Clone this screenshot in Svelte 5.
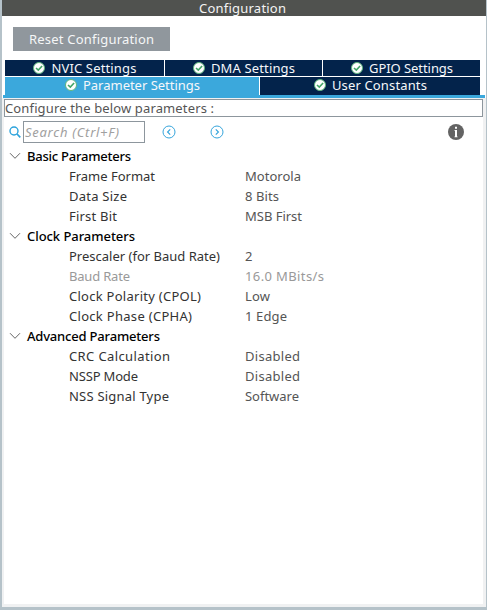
<script>
  const tabRows = [
    [
      { label: 'NVIC Settings', width: 159, text: 85 },
      { label: 'DMA Settings', width: 157, text: 84 },
      { label: 'GPIO Settings', width: 157, text: 84 }
    ],
    [
      { label: 'Parameter Settings', width: 254, text: 117, active: true },
      { label: 'User Constants', width: 220, text: 95 }
    ]
  ];

  const groups = [
    { name: 'Basic Parameters', w: 104, items: [
      ['Frame Format', 86, 'Motorola', 56],
      ['Data Size', 58, '8 Bits', 34],
      ['First Bit', 48, 'MSB First', 57]
    ] },
    { name: 'Clock Parameters', w: 108, items: [
      ['Prescaler (for Baud Rate)', 151, '2', 8],
      ['Baud Rate', 61, '16.0 MBits/s', 79, true],
      ['Clock Polarity (CPOL)', 132, 'Low', 25],
      ['Clock Phase (CPHA)', 123, '1 Edge', 42]
    ] },
    { name: 'Advanced Parameters', w: 133, items: [
      ['CRC Calculation', 101, 'Disabled', 55],
      ['NSSP Mode', 69, 'Disabled', 55],
      ['NSS Signal Type', 100, 'Software', 54]
    ] }
  ];

  // Spread the letters so that a label takes its nominal width.
  function fit(node, width) {
    const natural = node.getBoundingClientRect().width;
    const count = node.textContent.length;
    if (count > 1) node.style.letterSpacing = `${(width - natural) / (count - 1)}px`;
  }
</script>

<main>
  <header><span use:fit={87}>Configuration</span></header>
  <div class="toolbar"><button><span use:fit={125}>Reset Configuration</span></button></div>
  <nav>
    {#each tabRows as row}
      <div class="tabs">
        {#each row as tab}
          <div class="tab" class:active={tab.active} style:width="{tab.width}px">
            <svg width="12" height="12" viewBox="0 0 12 12">
              <circle cx="6" cy="6" r="5.5" fill="#fff" stroke="#5fb57e" />
              <path d="M3 6 5.3 8.1 9.1 4" fill="none" stroke="#43a667" stroke-width="1.6" />
            </svg>
            <span use:fit={tab.text}>{tab.label}</span>
          </div>
        {/each}
      </div>
    {/each}
  </nav>
  <div class="band"></div>
  <section>
    <div class="caption"><span use:fit={209}>Configure the below parameters :</span></div>
    <div class="search">
      <svg class="lens" width="12" height="12" viewBox="0 0 12 12" fill="none" stroke="#2ca3dc">
        <circle cx="5" cy="5" r="4" stroke-width="1.4" />
        <path d="m8 8 3.3 3.3" stroke-width="1.7" />
      </svg>
      <div class="field"><span use:fit={94}>Search (Ctrl+F)</span></div>
      <svg class="prev" width="14" height="14" viewBox="0 0 14 14" fill="none" stroke="#36a5dc">
        <circle cx="7" cy="7" r="6" />
        <path d="M8.2 4.3 5.6 7l2.6 2.7" stroke-width="1.2" />
      </svg>
      <svg class="next" width="14" height="14" viewBox="0 0 14 14" fill="none" stroke="#36a5dc">
        <circle cx="7" cy="7" r="6" />
        <path d="M5.8 4.3 8.4 7 5.8 9.7" stroke-width="1.2" />
      </svg>
      <svg class="info" width="16" height="16" viewBox="0 0 16 16">
        <circle cx="8" cy="8" r="8" fill="#636363" />
        <path d="M7 2.8h2v1.9H7zM6.4 6H9v6.5h.6v.8H6.4v-.8H7V6.8h-.6z" fill="#fff" />
      </svg>
    </div>
    {#each groups as group}
      <div class="group">
        <svg width="12" height="8" viewBox="0 0 12 8"><path d="M1 1.2 6 6.3l5-5.1" fill="none" stroke="#666" /></svg>
        <span use:fit={group.w}>{group.name}</span>
      </div>
      {#each group.items as [name, nameWidth, value, valueWidth, disabled]}
        <div class="item" class:disabled>
          <div class="name"><span use:fit={nameWidth}>{name}</span></div>
          <div class="value"><span use:fit={valueWidth}>{value}</span></div>
        </div>
      {/each}
    {/each}
  </section>
</main>

<style>
  main {
    box-sizing: border-box;
    display: flex;
    flex-direction: column;
    width: 487px;
    height: 610px;
    border: solid #b5c2c9;
    border-width: 0 1px 3px 2px;
    background: #fff;
    font: 13px/20px "Noto Sans", "Open Sans", sans-serif;
    color: #333;
    white-space: nowrap;
    overflow: hidden;
  }
  span { display: inline-block; flex: none; white-space: pre; }
  svg { flex: none; display: block; }
  header {
    height: 16px;
    line-height: 16px;
    background: #50524f;
    color: #f4f4f4;
    padding-left: 197px;
  }
  .toolbar { height: 44px; padding: 11px 0 0 11px; box-sizing: border-box; }
  button {
    display: block;
    width: 157px;
    height: 24px;
    border: 0;
    padding: 0 0 0 16px;
    background: #90979d;
    color: #f5f6f7;
    font: inherit;
    line-height: 24px;
    text-align: left;
  }
  nav { padding-left: 3px; height: 35px; }
  .tabs { display: flex; gap: 1px; height: 16px; margin-bottom: 1px; }
  .tabs:last-child { height: 18px; margin: 0; }
  .tabs:last-child .tab { padding-bottom: 2px; }
  .tab {
    box-sizing: border-box;
    display: flex;
    align-items: center;
    justify-content: center;
    gap: 6px;
    padding-left: 1px;
    background: #03234b;
    color: #f5f7fa;
    line-height: 16px;
  }
  .active { background: #3ba8dc; }
  .band { height: 3px; margin: 0 1px; background: #3ba8dc; }
  section { flex: 1; border: solid #f0f1f2; border-width: 1px 3px 3px 2px; }
  .caption {
    box-sizing: border-box;
    height: 18px;
    border: 1px solid #8d969d;
    line-height: 17px;
    color: #555;
  }
  .search { display: flex; align-items: center; height: 22px; margin: 4px 0 3px; padding-left: 5px; }
  .field {
    box-sizing: border-box;
    width: 122px;
    height: 22px;
    margin-left: 2px;
    padding-left: 1px;
    border: 1px solid #8d969d;
    color: #a0a0a0;
    font-style: italic;
  }
  .prev { margin-left: 17px; }
  .next { margin-left: 34px; }
  .info { margin-left: 224px; }
  .group { display: flex; align-items: center; height: 20px; padding-left: 5px; gap: 6px; color: #000; font-weight: 500; }
  .item { display: flex; height: 20px; padding-left: 65px; }
  .name { width: 176px; color: #333; }
  .value { color: #555; }
  .disabled .name, .disabled .value { color: #999; }
</style>
